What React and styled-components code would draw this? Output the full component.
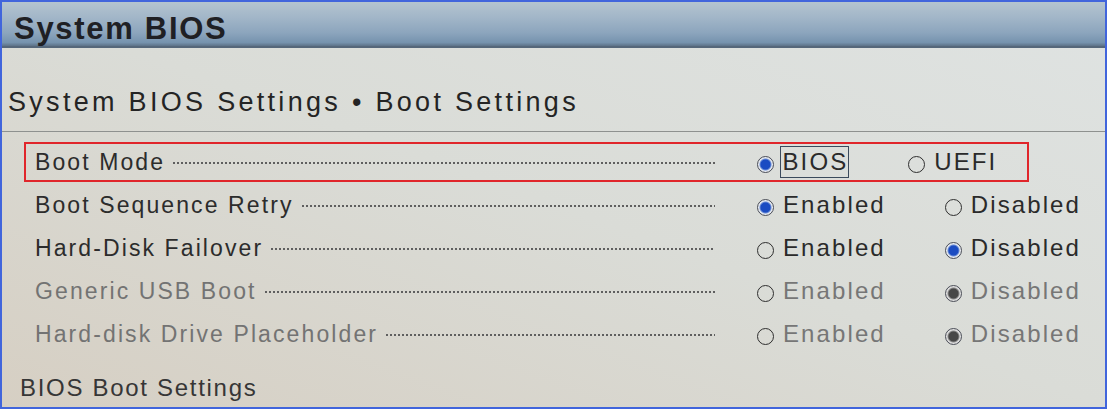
import styled, { createGlobalStyle } from "styled-components";

const GlobalStyle = createGlobalStyle`
  body {
    margin: 0;
    background: #d9dbd6;
  }
`;

const rows = [
  {
    label: "Boot Mode",
    focus: true,
    options: [
      { text: "BIOS", checked: true, boxed: true },
      { text: "UEFI", checked: false },
    ],
  },
  {
    label: "Boot Sequence Retry",
    options: [
      { text: "Enabled", checked: true },
      { text: "Disabled", checked: false },
    ],
  },
  {
    label: "Hard-Disk Failover",
    options: [
      { text: "Enabled", checked: false },
      { text: "Disabled", checked: true },
    ],
  },
  {
    label: "Generic USB Boot",
    muted: true,
    options: [
      { text: "Enabled", checked: false },
      { text: "Disabled", checked: true },
    ],
  },
  {
    label: "Hard-disk Drive Placeholder",
    muted: true,
    options: [
      { text: "Enabled", checked: false },
      { text: "Disabled", checked: true },
    ],
  },
];

const App = () => {
  return (
    <>
      <GlobalStyle />
      <Screen>
        <Header>System BIOS</Header>
        <SubHeader>System BIOS Settings • Boot Settings</SubHeader>
        <List>
          {rows.map((row) => (
            <Row key={row.label} $focus={row.focus}>
              <LabelCell>
                <Label $muted={row.muted}>{row.label}</Label>
                <Leader />
              </LabelCell>
              <Options>
                {row.options.map((opt) => (
                  <Option key={opt.text}>
                    <Radio $checked={opt.checked} $muted={row.muted} />
                    <OptionText $muted={row.muted} $boxed={opt.boxed}>
                      {opt.text}
                    </OptionText>
                  </Option>
                ))}
              </Options>
            </Row>
          ))}
        </List>
        <Footer>BIOS Boot Settings</Footer>
      </Screen>
    </>
  );
};

export default App;

const Screen = styled.div`
  width: 1107px;
  height: 409px;
  box-sizing: border-box;
  border: 2px solid #4165dc;
  overflow: hidden;
  display: flex;
  flex-direction: column;
  font-family: "Liberation Sans", Arial, sans-serif;
  background: linear-gradient(200deg, #dfe3e2 0%, #dadcd7 50%, #d6cfc3 100%);
`;

const Header = styled.div`
  height: 46px;
  flex-shrink: 0;
  box-sizing: border-box;
  padding: 9px 0 0 12px;
  display: flex;
  align-items: center;
  font-size: 31px;
  font-weight: 700;
  letter-spacing: 1.7px;
  color: #1f2024;
  background: linear-gradient(
    180deg,
    #b4c4d0 0%,
    #a2b6c8 35%,
    #8ca5bd 70%,
    #7693ae 92%,
    #5d7288 100%
  );
  border-bottom: 2px solid #55677a;
`;

const SubHeader = styled.div`
  height: 84px;
  flex-shrink: 0;
  box-sizing: border-box;
  padding: 25px 0 0 6px;
  display: flex;
  align-items: center;
  font-size: 27px;
  letter-spacing: 3.3px;
  color: #242424;
  border-bottom: 1px solid #8e918f;
`;

const List = styled.div`
  display: flex;
  flex-direction: column;
  gap: 3px;
  padding: 10px 0 0 22px;
`;

const Row = styled.div`
  width: 1005px;
  height: 40px;
  flex-shrink: 0;
  box-sizing: border-box;
  display: flex;
  align-items: center;
  padding-left: 9px;
  border: 2px solid ${(p) => (p.$focus ? "#e0262b" : "transparent")};
`;

const LabelCell = styled.div`
  width: 680px;
  flex-shrink: 0;
  display: flex;
  align-items: center;
  gap: 8px;
  margin-right: 40px;
`;

const Label = styled.span`
  font-size: 23px;
  letter-spacing: 2.1px;
  white-space: nowrap;
  color: ${(p) => (p.$muted ? "#737373" : "#2c2c2c")};
`;

const Leader = styled.span`
  flex: 1;
  height: 2px;
  margin-top: 2px;
  background: repeating-linear-gradient(
    90deg,
    #5f5f5f 0 2px,
    transparent 2px 4px
  );
`;

const Options = styled.div`
  display: flex;
  flex-shrink: 0;
  align-items: center;
  gap: 57px;
`;

const Option = styled.div`
  display: flex;
  align-items: center;
`;

const Radio = styled.span`
  width: 17px;
  height: 17px;
  flex-shrink: 0;
  box-sizing: border-box;
  border-radius: 50%;
  margin: 4px 9px 0 2px;
  border: 1.5px solid ${(p) => (p.$checked ? "#4a4d57" : "#2e2e2e")};
  background: ${(p) =>
    p.$checked
      ? p.$muted
        ? "radial-gradient(circle, #474747 0 4.5px, #8a8a8a 5.5px, #dedede 6.5px)"
        : "radial-gradient(circle, #1b4cc2 0 4.5px, #6a8cd6 5.5px, #e6eaf0 6.5px)"
      : "transparent"};
`;

const OptionText = styled.span`
  font-size: 24px;
  letter-spacing: 2.1px;
  line-height: 30px;
  white-space: nowrap;
  color: ${(p) => (p.$muted ? "#767676" : "#2a2a2a")};
  ${(p) =>
    p.$boxed &&
    `
    border: 1.5px solid #3b4a5c;
    padding: 0 0 0 2px;
    margin-left: -3.5px;
  `}
`;

const Footer = styled.div`
  margin: 19px 0 0 18px;
  font-size: 24px;
  line-height: 30px;
  letter-spacing: 1.7px;
  color: #363636;
`;
